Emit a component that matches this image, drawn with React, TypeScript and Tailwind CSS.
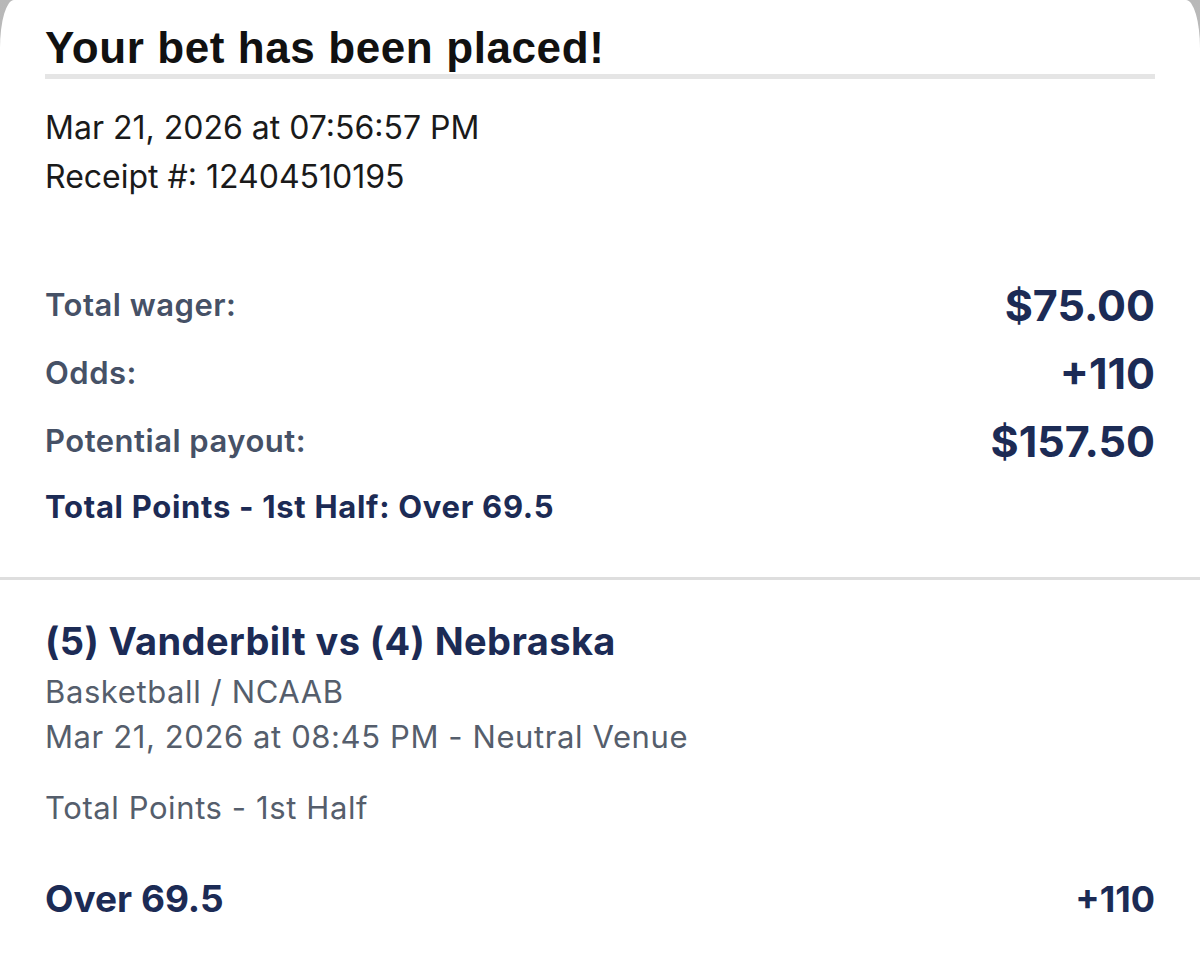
export default function App() {
  return (
    <div className="min-h-[966px] bg-gradient-to-b from-[#b8b8b8] to-[#e0e0e0]">
      <div className="min-h-[966px] bg-white rounded-tl-[14px_48px] rounded-tr-[14px_48px] font-['Inter',sans-serif]">
        {/* Header */}
        <div className="px-[45px] pt-[24px]">
          <h1 className="text-[44px] leading-[48px] font-bold text-[#111] font-['Liberation_Sans',sans-serif] tracking-[0.6px]">
            Your bet has been placed!
          </h1>
          <div className="h-[5px] bg-[#e5e5e5] mt-[2px]" />
          <div className="mt-[24px] text-[32px] leading-[49px] text-[#1a1a1a]">
            <p>Mar 21, 2026 at 07:56:57 PM</p>
            <p>Receipt #: 12404510195</p>
          </div>
        </div>

        {/* Summary */}
        <div className="px-[45px] pt-[70px] pb-[40px]">
          <div className="flex items-center justify-between h-[68px]">
            <span className="text-[31px] font-semibold text-[#465166] tracking-[0.5px]">Total wager:</span>
            <span className="text-[43px] font-bold text-[#1c2b55]">$75.00</span>
          </div>
          <div className="flex items-center justify-between h-[68px]">
            <span className="text-[31px] font-semibold text-[#465166] tracking-[0.5px]">Odds:</span>
            <span className="text-[43px] font-bold text-[#1c2b55]">+110</span>
          </div>
          <div className="flex items-center justify-between h-[68px]">
            <span className="text-[31px] font-semibold text-[#465166] tracking-[0.5px]">Potential payout:</span>
            <span className="text-[43px] font-bold text-[#1c2b55]">$157.50</span>
          </div>
          <p className="mt-[2px] text-[31px] leading-[60px] font-bold text-[#1c2b55] tracking-[0.7px]">
            Total Points - 1st Half: Over 69.5
          </p>
        </div>

        <div className="h-[3px] bg-[#dedede]" />

        {/* Event */}
        <div className="px-[45px] pt-[36px]">
          <h2 className="text-[38px] leading-[50px] font-bold text-[#1c2b55] tracking-[0.4px]">
            (5) Vanderbilt vs (4) Nebraska
          </h2>
          <div className="mt-[3px] text-[31px] leading-[45px] text-[#555e6c] tracking-[0.6px]">
            <p>Basketball / NCAAB</p>
            <p>Mar 21, 2026 at 08:45 PM - Neutral Venue</p>
            <p className="mt-[26px]">Total Points - 1st Half</p>
          </div>
          <div className="mt-[41px] flex items-center justify-between text-[#1c2b55]">
            <span className="text-[37px] font-bold">Over 69.5</span>
            <span className="text-[36px] font-bold">+110</span>
          </div>
        </div>
      </div>
    </div>
  )
}
